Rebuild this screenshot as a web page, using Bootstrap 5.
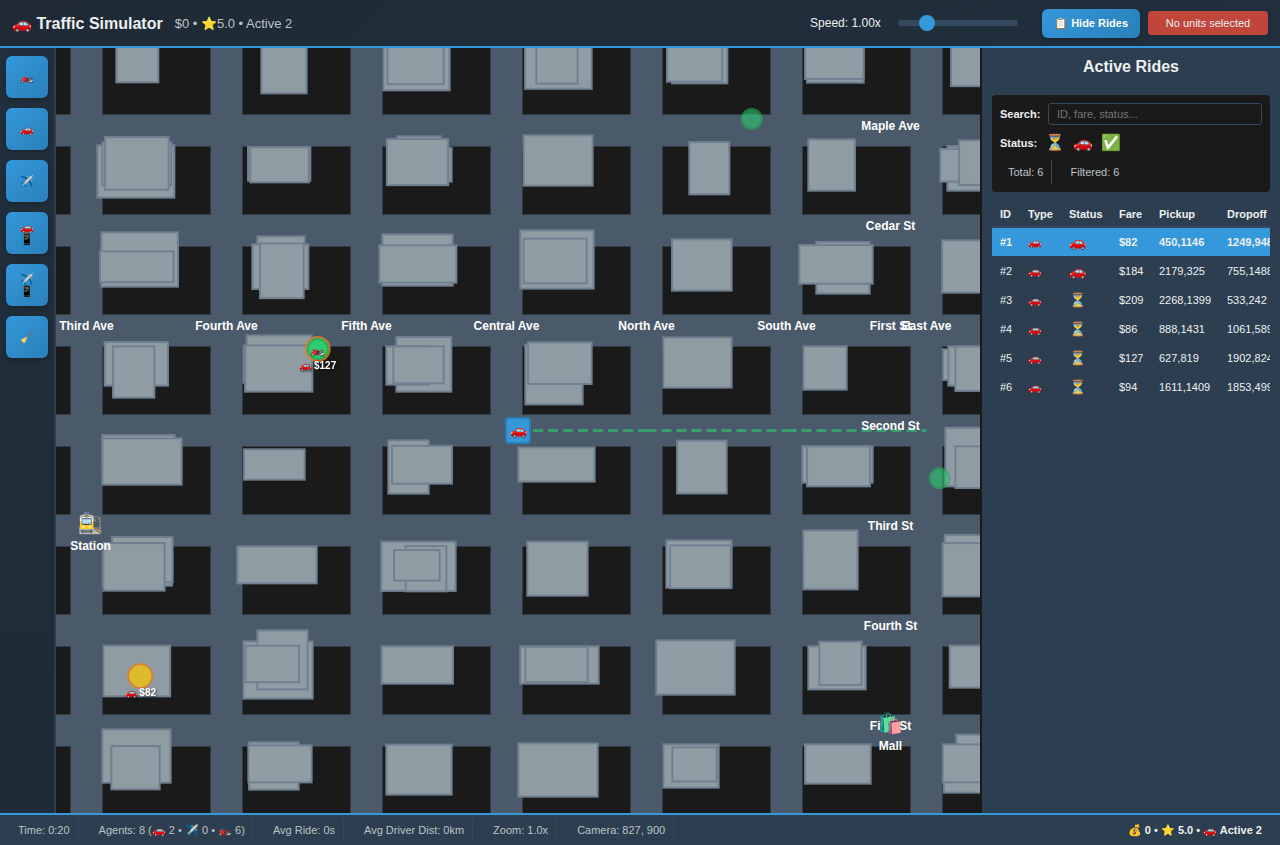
<!DOCTYPE html>
<html lang="en">
<head>
<meta charset="utf-8">
<meta name="viewport" content="width=device-width, initial-scale=1">
<title>Traffic Simulator</title>
<link href="https://cdn.jsdelivr.net/npm/bootstrap@5.3.0/dist/css/bootstrap.min.css" rel="stylesheet">
<style>
  body { font-family: "Liberation Sans", Arial, sans-serif; font-size: 11px; line-height: normal; color: #ecf0f1; background: #1a1a1a; }
  .topbar { height: 48px; padding: 0 12px; background: linear-gradient(135deg, #1f2a36, #212f3c); border-bottom: 2px solid #3498db; }
  .topbar h1 { font-size: 16px; font-weight: 700; line-height: 18px; padding-top: 1px; }
  .muted { color: #bdc3c7; }
  .summary { font-size: 13px; }
  .speed-label { font-size: 12px; width: 88px; }
  .speed { appearance: none; width: 120px; height: 6px; border-radius: 3px; background: #34495e; margin: 0 24px 0 0; }
  .speed::-webkit-slider-thumb { appearance: none; width: 16px; height: 16px; border-radius: 50%; background: #3498db; }
  .btn-blue { background: linear-gradient(135deg, #3498db, #2980b9); color: #fff; border: 0; border-radius: 6px; box-shadow: 0 2px 4px rgba(0,0,0,.2); font-size: 11px; font-weight: 700; line-height: 13px; padding: 8px 12px; }
  .btn-tool { width: 42px; height: 42px; padding: 0; font-size: 11px; line-height: 12px; font-weight: 400; }
  .units { width: 120px; height: 24px; border-radius: 4px; background: #c0463b; }
  .tools { width: 56px; padding: 8px 0 0 6px; gap: 10px; background: linear-gradient(180deg, #212e3b, #1f2b37); border-right: 2px solid #2c3e50; }
  .map { width: 924px; }
  .map text { font-weight: 700; font-size: 12px; fill: #fff; text-anchor: middle; }
  .map .fare { font-size: 10px; }
  .shade { filter: drop-shadow(1px 1px 1px rgba(0,0,0,.55)); }
  .rides { width: 300px; background: #2c3e50; border-left: 2px solid #1a1a1a; padding: 10px 10px 0; }
  .rides h2 { font-size: 16px; font-weight: 700; line-height: 18px; margin: 0 0 19px; }
  .filters { background: #1a1a1a; border-radius: 4px; padding: 8px; height: 97px; }
  .filters .search { height: 22px; font-size: 11px; padding: 0 8px; background: #1a1a1a; color: #ecf0f1; border: 1px solid #34495e; border-radius: 3px; }
  .filters .search::placeholder { color: #757575; }
  .states { font-size: 16px; gap: 8px; line-height: 20px; }
  .states span { width: 20px; }
  .stats { margin-top: 7px; }
  .stat { padding: 0 8px; height: 24px; }
  .stat + .stat { margin-left: 10px; }
  .ruled { border-right: 1px solid #34495e; }
  .ride-list { table-layout: fixed; width: 292px; margin-top: 10px; border-collapse: separate; border-spacing: 0; }
  .ride-list th, .ride-list td { padding: 0 8px; white-space: nowrap; height: 29px; line-height: 13px; vertical-align: middle; border-bottom: 1px solid #2c3e50; }
  .ride-list th { height: 26px; border-bottom: 2px solid #34495e; }
  .ride-list .picked td { background: #3498db; font-weight: 700; }
  .ride-list td:nth-child(3) { font-size: 14px; }
  .statusbar { height: 32px; border-top: 2px solid #3498db; background: #2c3e50; padding: 0 18px 0 10px; gap: 12px; }
  .statusbar .ruled { padding: 0 8px; height: 24px; }
  .statusbar .agents { padding-right: 7px; }
</style>
</head>
<body class="d-flex flex-column vh-100 overflow-hidden">

<header class="topbar d-flex align-items-center flex-shrink-0">
  <h1 class="m-0">🚗 Traffic Simulator</h1>
  <span class="summary muted ms-2 ps-1">$0 • ⭐5.0 • Active 2</span>
  <label class="speed-label ms-auto" for="speed">Speed: 1.00x</label>
  <input class="speed" id="speed" type="range" min="0" max="100" value="20">
  <button class="btn btn-blue me-2">📋 Hide Rides</button>
  <span class="units d-flex align-items-center justify-content-center">No units selected</span>
</header>

<main class="d-flex flex-grow-1 overflow-hidden">
  <nav class="tools d-flex flex-column flex-shrink-0">
    <button class="btn btn-blue btn-tool">🏍️</button>
    <button class="btn btn-blue btn-tool">🚗</button>
    <button class="btn btn-blue btn-tool">✈️</button>
    <button class="btn btn-blue btn-tool">🚗<br>📱</button>
    <button class="btn btn-blue btn-tool">✈️<br>📱</button>
    <button class="btn btn-blue btn-tool">🧹</button>
  </nav>

  <svg class="map flex-shrink-0" viewBox="56 48 924 765" width="924" height="765">
    <defs>
      <pattern id="blocks" patternUnits="userSpaceOnUse" x="90" y="140" width="140" height="100">
        <rect width="140" height="100" fill="#4b5a6a"/>
        <rect x="12.5" y="6.5" width="108" height="68" fill="#1a1a1a" stroke="#333c46"/>
      </pattern>
    </defs>
    <rect x="56" y="48" width="924" height="765" fill="url(#blocks)"/>
    <g id="buildings" fill="#909ca3" stroke="#708090" stroke-width="2"></g>

    <g fill="#2ecc71" stroke="#27ae60" stroke-width="2" opacity=".6">
      <circle cx="751.7" cy="119" r="10"/>
      <circle cx="939.5" cy="478.3" r="10"/>
    </g>
    <g stroke="#2ecc71" stroke-width="3" stroke-dasharray="10 5" opacity=".6">
      <path d="M518 430.5H646.5"/><path d="M646.5 430.5H786.5"/><path d="M786.5 430.5H926.5"/>
    </g>

    <g>
      <text x="86.5" y="330">Third Ave</text>
      <text x="226.5" y="330">Fourth Ave</text>
      <text x="366.5" y="330">Fifth Ave</text>
      <text x="506.5" y="330">Central Ave</text>
      <text x="646.5" y="330">North Ave</text>
      <text x="786.5" y="330">South Ave</text>
      <text x="890.5" y="330">First St</text>
      <text x="926.5" y="330">East Ave</text>
      <text x="890.5" y="130">Maple Ave</text>
      <text x="890.5" y="230">Cedar St</text>
      <text x="890.5" y="430">Second St</text>
      <text x="890.5" y="530">Third St</text>
      <text x="890.5" y="630">Fourth St</text>
      <text x="890.5" y="730">Fifth St</text>
      <text x="90.5" y="550">Station</text>
      <text x="890.5" y="750">Mall</text>
    </g>
    <text x="90.5" y="530" style="font-size:20px;font-weight:400">🚉</text>
    <text x="890.5" y="730" style="font-size:20px;font-weight:400">🛍️</text>

    <circle cx="140.3" cy="676" r="12" fill="#f1c40f" stroke="#e67e22" stroke-width="2" opacity=".8"/>
    <circle cx="317.7" cy="349" r="12" fill="#f1c40f" stroke="#e67e22" stroke-width="2" opacity=".8"/>
    <circle cx="317.7" cy="349" r="10" fill="#2ecc71" stroke="#27ae60" stroke-width="2"/>
    <text x="317.7" y="353.5" style="font-size:12px">🏍️</text>
    <text class="fare shade" x="140.3" y="696">🚗 $82</text>
    <text class="fare shade" x="317.7" y="369">🚗 $127</text>

    <rect x="506" y="418" width="24" height="25" rx="3" fill="#3498db" stroke="#2980b9" stroke-width="2"/>
    <text x="518" y="435" style="font-size:14px">🚗</text>
  </svg>

  <aside class="rides flex-grow-1 overflow-hidden">
    <h2 class="text-center">Active Rides</h2>
    <section class="filters">
      <div class="d-flex align-items-center">
        <label class="fw-bold" for="q" style="width:48px">Search:</label>
        <input class="search flex-grow-1" id="q" placeholder="ID, fare, status...">
      </div>
      <div class="d-flex align-items-center mt-2">
        <span class="fw-bold" style="width:45px">Status:</span>
        <div class="states d-flex"><span>⏳</span><span>🚗</span><span>✅</span></div>
      </div>
      <div class="stats d-flex muted">
        <span class="stat ruled d-flex align-items-center">Total: 6</span>
        <span class="stat d-flex align-items-center">Filtered: 6</span>
      </div>
    </section>
    <div class="overflow-hidden">
    <table class="ride-list">
      <colgroup><col style="width:28px"><col style="width:41px"><col style="width:50px"><col style="width:40px"><col style="width:68px"><col></colgroup>
      <thead><tr><th>ID</th><th>Type</th><th>Status</th><th>Fare</th><th>Pickup</th><th>Dropoff</th></tr></thead>
      <tbody>
        <tr class="picked"><td>#1</td><td>🚗</td><td>🚗</td><td>$82</td><td>450,1146</td><td>1249,948</td></tr>
        <tr><td>#2</td><td>🚗</td><td>🚗</td><td>$184</td><td>2179,325</td><td>755,1488</td></tr>
        <tr><td>#3</td><td>🚗</td><td>⏳</td><td>$209</td><td>2268,1399</td><td>533,242</td></tr>
        <tr><td>#4</td><td>🚗</td><td>⏳</td><td>$86</td><td>888,1431</td><td>1061,589</td></tr>
        <tr><td>#5</td><td>🚗</td><td>⏳</td><td>$127</td><td>627,819</td><td>1902,824</td></tr>
        <tr><td>#6</td><td>🚗</td><td>⏳</td><td>$94</td><td>1611,1409</td><td>1853,499</td></tr>
      </tbody>
    </table>
    </div>
  </aside>
</main>

<footer class="statusbar muted d-flex align-items-center flex-shrink-0">
  <span class="ruled d-flex align-items-center">Time: 0:20</span>
  <span class="ruled agents d-flex align-items-center">Agents: 8 (🚗 2 • ✈️ 0 • 🏍️ 6)</span>
  <span class="ruled d-flex align-items-center">Avg Ride: 0s</span>
  <span class="ruled d-flex align-items-center">Avg Driver Dist: 0km</span>
  <span class="ruled d-flex align-items-center">Zoom: 1.0x</span>
  <span class="ruled d-flex align-items-center">Camera: 827, 900</span>
  <strong class="ms-auto" style="color:#ecf0f1">💰 0 • ⭐ 5.0 • 🚗 Active 2</strong>
</footer>

<script src="https://cdn.jsdelivr.net/npm/bootstrap@5.3.0/dist/js/bootstrap.bundle.min.js"></script>
<script>
  // Building footprints, back to front: left, top, right, bottom
  const footprints = [
    [115,40,159.7,83.7],[260,40,308,94.7],[382,40,451,91.7],[386,40,445,85.5],[523.7,40,593,90.2],[535,40,579,85],
    [670.7,40,728.7,84.7],[665.7,40,723.5,83],[805.7,40,865,84],[803.7,40,865,80.3],[949.7,40,1000,87.5],
    [96,144,175.7,199],[101,141,172.7,186.7],[103.7,135.7,170,191],[246.7,145.7,311.7,182],[249,145.7,310.2,183.7],
    [396,135,442.3,170],[400,146.7,453,183],[385.5,137.7,449.5,186.5],[522.3,134,594,187],[688,140.7,730.7,195.7],
    [807,138,856.3,192],[946,144.7,1000,192],[939,147.5,970,183],[957.7,139,1000,186.3],
    [100,231,179.3,288],[98.7,250,175,283.5],[256,235,306,280],[251,243,309.7,290.3],[258.7,242,305,299.5],
    [381,233,454,287],[378,244,457.7,284],[519,229,595,290],[522.3,237.3,588,284.7],[670.7,238,733,292],
    [815,240.7,871,295],[798,243.7,874,285],[940.7,239,1000,294],
    [103.3,340.7,169.3,387],[111.7,345,155.7,399],[245.3,334,313,385],[242,345,300,384],[243.7,344,313.7,393],
    [395,335.7,452.7,393],[385,345,430,386],[392,345,445,384.7],[524,343.5,584,405.7],[526.7,341,593,385.3],
    [662,336,733,389],[802,345,848,391],[941.7,348,1000,381.3],[947,345,1000,387],[954,345,1000,392.3],
    [101,433.7,176,470],[101,437,183,486],[242.7,448,306,481],[387,439,430,495],[390.7,444.5,453.3,485],
    [517,446,596,483],[675.7,439.3,728,494.8],[801,445,874,484],[805.7,445,871.3,487.7],[944,426.3,1000,487.7],[954,445,1000,489.3],
    [101.5,550,173.3,587],[110.7,535.7,174,583.7],[102,541.7,166,592],[236,545,318,584.7],
    [380,540.3,457,592.3],[404.3,544.7,447.7,592.7],[392.7,548.7,441,582],[526,540.3,589,597],
    [665,539,733,589],[668.7,544,732,589.5],[802,529,859,590.7],[943.3,533.7,1000,590],[941.3,541.7,1000,597.7],
    [102,644.3,171.5,697.7],[242,640,314,700],[256,629,309,690.7],[244,644.3,300.3,683.5],[380.3,645,454.3,685],
    [519,645,600,685],[524,645.5,589,683.5],[655,639,736,696],[807,645,867,690.7],[818,640.3,863,686.3],[948.3,644.3,1000,689],
    [101,728,172,784],[110,744.7,161,790.7],[247.7,741,300,791],[247,744,313,783.7],[385,743.3,453,796],
    [517,742,599,798],[662,743,720,789],[671,746,718,782.8],[803.7,743,872,785],
    [955,733.3,1000,780],[942.5,750,1000,794],[941.5,743,1000,783.7]
  ];
  const inset = 1.35;
  const layer = document.getElementById('buildings');
  for (const [l, t, r, b] of footprints) {
    const el = document.createElementNS('http://www.w3.org/2000/svg', 'rect');
    el.setAttribute('x', l + inset);
    el.setAttribute('y', t + inset);
    el.setAttribute('width', r - l - 2 * inset);
    el.setAttribute('height', b - t - 2 * inset);
    layer.appendChild(el);
  }
</script>
</body>
</html>
